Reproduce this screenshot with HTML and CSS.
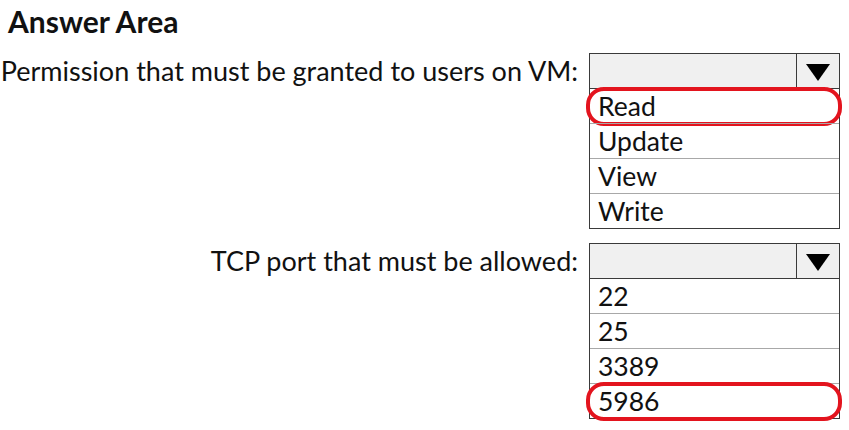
FILE: index.html
```html
<!DOCTYPE html>
<html>
<head>
<meta charset="utf-8">
<link rel="stylesheet" href="styles.css">
</head>
<body>
<div class="page">
  <h1 class="title">Answer Area</h1>
  <div class="qa">
    <div class="label">Permission that must be granted to users on VM:</div>
    <div class="dropdown">
      <div class="head"><div class="value"></div><div class="arrow"><svg width="24" height="17" viewBox="0 0 24 17"><path d="M0 0H24L12 17Z" fill="#000"/></svg></div></div>
      <div class="opt selected">Read</div>
      <div class="opt">Update</div>
      <div class="opt">View</div>
      <div class="opt">Write</div>
    </div>
    <div class="label">TCP port that must be allowed:</div>
    <div class="dropdown">
      <div class="head"><div class="value"></div><div class="arrow"><svg width="24" height="17" viewBox="0 0 24 17"><path d="M0 0H24L12 17Z" fill="#000"/></svg></div></div>
      <div class="opt">22</div>
      <div class="opt">25</div>
      <div class="opt">3389</div>
      <div class="opt selected">5986</div>
    </div>
  </div>
</div>
</body>
</html>
```
FILE: styles.css
```css
html, body {
  margin: 0;
  padding: 0;
  background: #fff;
}
.page {
  width: 849px;
  height: 430px;
  font-family: "Lato", "Open Sans", sans-serif;
  color: #111;
  position: relative;
}
.title {
  margin: 0;
  padding: 3px 0 0 8px;
  height: 53px;
  box-sizing: border-box;
  font-size: 30px;
  font-weight: 700;
  line-height: 36px;
}
.qa {
  display: grid;
  grid-template-columns: 589px 251px;
  row-gap: 14px;
  align-items: start;
}
.label {
  text-align: right;
  padding-right: 11px;
  font-size: 27px;
  line-height: 34px;
  margin-top: 1px;
  white-space: nowrap;
}
.dropdown {
  border: 1px solid #3a3a3a;
  box-sizing: border-box;
  width: 251px;
}
.head {
  display: flex;
  height: 34px;
  background: #f0f0f0;
  border-bottom: 1px solid #3a3a3a;
}
.value {
  flex: 1;
}
.arrow {
  width: 43px;
  border-left: 1px solid #3a3a3a;
  display: flex;
  align-items: center;
  justify-content: center;
  padding-top: 2px;
  box-sizing: border-box;
}
.opt {
  position: relative;
  height: 35px;
  line-height: 34px;
  padding-left: 8px;
  font-size: 26.5px;
  border-top: 1px solid #a8a8a8;
  box-sizing: border-box;
}
.head + .opt {
  border-top: none;
  height: 34px;
}
.opt.selected::after {
  content: "";
  position: absolute;
  left: -4px;
  right: -3px;
  top: -2px;
  bottom: -3px;
  border: 4px solid #e3141e;
  border-radius: 18px / 18px;
}
```
